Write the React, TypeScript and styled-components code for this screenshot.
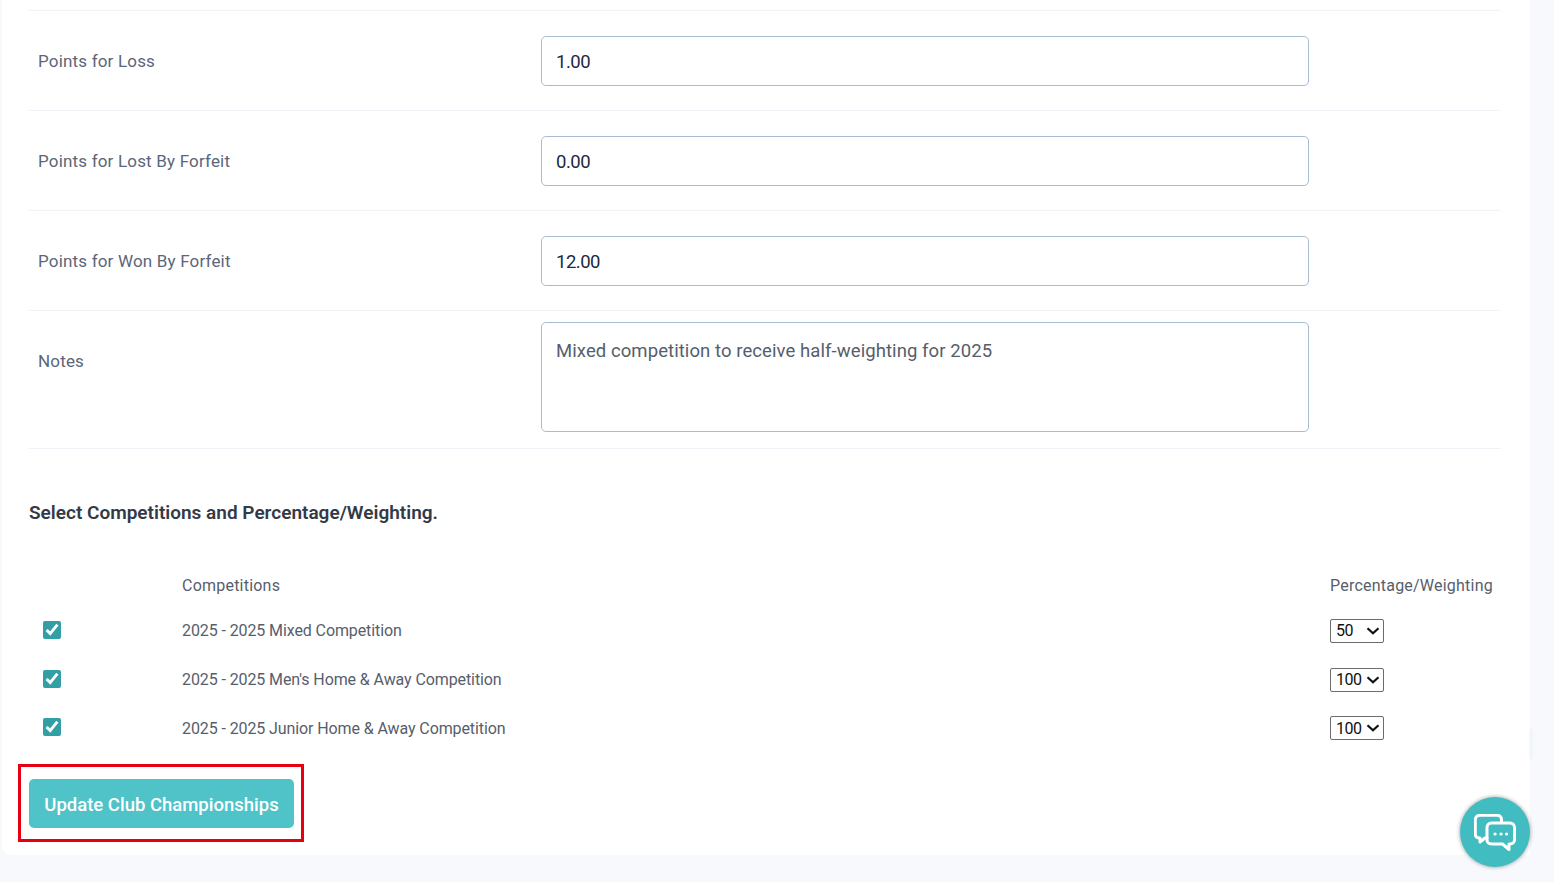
import styled, { createGlobalStyle } from 'styled-components';

const GlobalStyle = createGlobalStyle`
  html, body {
    margin: 0;
    height: 882px;
    overflow: hidden;
    background: #f7f9fd;
    font-family: Roboto, "Liberation Sans", sans-serif;
  }
`;

const Card = styled.main`
  position: relative;
  box-sizing: border-box;
  width: 1528px;
  height: 855px;
  margin-left: 2px;
  padding: 0 29px 0 27px;
  background: #fff;
  border-bottom-left-radius: 10px;

  &::after {
    content: '';
    position: absolute;
    right: -2px;
    top: 729px;
    width: 2px;
    height: 30px;
    background: #eef0f3;
    border-radius: 0 3px 3px 0;
    filter: blur(1px);
  }
`;

const TopEdge = styled.div`
  height: 10px;
  border-bottom: 1px solid #f0f3f7;
`;

const FormRow = styled.div<{ $tall?: boolean }>`
  display: grid;
  grid-template-columns: 512px 768px;
  align-items: ${(p) => (p.$tall ? 'start' : 'center')};
  box-sizing: border-box;
  height: ${(p) => (p.$tall ? 138 : 100)}px;
  padding-top: ${(p) => (p.$tall ? 11 : 0)}px;
  border-bottom: 1px solid #f0f3f7;
`;

const Label = styled.label<{ $tall?: boolean }>`
  padding-left: 9px;
  padding-top: ${(p) => (p.$tall ? 29 : 0)}px;
  font-size: 17px;
  line-height: 20px;
  letter-spacing: 0.18px;
  color: #5b667a;
`;

const TextInput = styled.input`
  box-sizing: border-box;
  width: 768px;
  height: 50px;
  padding: 2px 14px 0;
  border: 1px solid #a9bdd2;
  border-radius: 5px;
  background: #fff;
  font: 400 18.5px Roboto, sans-serif;
  letter-spacing: -0.5px;
  color: #1d2a3f;
  outline: none;
`;

const NotesInput = styled.textarea`
  display: block;
  box-sizing: border-box;
  width: 768px;
  height: 110px;
  padding: 16px 14px;
  border: 1px solid #a9bdd2;
  border-radius: 5px;
  background: #fff;
  font: 400 18.5px/24px Roboto, sans-serif;
  letter-spacing: 0.08px;
  color: #555e6c;
  outline: none;
  resize: none;
`;

const SectionTitle = styled.h2`
  margin: 52px 0 0;
  font-size: 19px;
  line-height: 24px;
  font-weight: 600;
  color: #333a47;
`;

const CompTable = styled.div`
  margin-top: 38px;
  display: flex;
  flex-direction: column;
`;

const CompRow = styled.div<{ $head?: boolean }>`
  display: grid;
  grid-template-columns: 153px 1148px 1fr;
  align-items: center;
  box-sizing: border-box;
  height: ${(p) => (p.$head ? 43.5 : 48.7)}px;
  padding-top: ${(p) => (p.$head ? 2 : 0)}px;
  font-size: 16px;
  letter-spacing: ${(p) => (p.$head ? 0.22 : -0.1)}px;
  color: #575e6b;
`;

const Tick = styled.input`
  width: 18px;
  height: 18px;
  margin: -2px 0 0 14px;
  accent-color: #329fa6;
`;

const SelectWrap = styled.span`
  position: relative;
  display: block;
  width: 54px;
  height: 24px;
`;

const Percent = styled.select`
  appearance: none;
  display: block;
  box-sizing: border-box;
  width: 54px;
  height: 24px;
  padding: 0 0 0 5px;
  border: 1px solid #6b6b6b;
  border-radius: 2px;
  background: #fff;
  font: 400 16px Roboto, sans-serif;
  letter-spacing: -0.5px;
  color: #111;
`;

const Chevron = styled.svg`
  position: absolute;
  right: 4px;
  top: 8px;
  pointer-events: none;
`;

const Highlight = styled.div`
  box-sizing: border-box;
  width: 286px;
  height: 78px;
  margin: 11px 0 0 -11px;
  padding: 12px 8px;
  border: 3px solid #e60012;
`;

const SaveButton = styled.button`
  width: 265px;
  height: 49px;
  padding: 3px 0 0;
  border: 0;
  border-radius: 5px;
  background: #4fc3c7;
  color: #fff;
  font: 500 18.5px Roboto, sans-serif;
`;

const ChatBubble = styled.button`
  position: fixed;
  left: 1460px;
  top: 797px;
  display: flex;
  align-items: center;
  justify-content: center;
  width: 70px;
  height: 70px;
  padding: 0;
  border: 0;
  border-radius: 50%;
  background: #41bdc2;
  box-shadow: 0 0 4px rgba(0, 0, 0, 0.4);
`;

const fields = [
  { label: 'Points for Loss', value: '1.00' },
  { label: 'Points for Lost By Forfeit', value: '0.00' },
  { label: 'Points for Won By Forfeit', value: '12.00' },
];

const competitions = [
  { name: '2025 - 2025 Mixed Competition', weight: '50' },
  { name: "2025 - 2025 Men's Home & Away Competition", weight: '100' },
  { name: '2025 - 2025 Junior Home & Away Competition', weight: '100' },
];

const weights = ['25', '50', '75', '100'];

export default function App() {
  return (
    <>
      <GlobalStyle />
      <Card>
        <TopEdge />
        {fields.map((f) => (
          <FormRow key={f.label}>
            <Label>{f.label}</Label>
            <TextInput defaultValue={f.value} />
          </FormRow>
        ))}
        <FormRow $tall>
          <Label $tall>Notes</Label>
          <NotesInput defaultValue="Mixed competition to receive half-weighting for 2025" />
        </FormRow>
        <SectionTitle>Select Competitions and Percentage/Weighting.</SectionTitle>
        <CompTable>
          <CompRow $head>
            <span />
            <span>Competitions</span>
            <span>Percentage/Weighting</span>
          </CompRow>
          {competitions.map((c) => (
            <CompRow key={c.name}>
              <Tick type="checkbox" defaultChecked />
              <span>{c.name}</span>
              <SelectWrap>
                <Percent defaultValue={c.weight}>
                  {weights.map((w) => (
                    <option key={w}>{w}</option>
                  ))}
                </Percent>
                <Chevron width="14" height="8" viewBox="0 0 14 8" fill="none" stroke="#111" strokeWidth="2.2">
                  <path d="M1.500 1.200 7 6.300l5.500-5.100" />
                </Chevron>
              </SelectWrap>
            </CompRow>
          ))}
        </CompTable>
        <Highlight>
          <SaveButton>Update Club Championships</SaveButton>
        </Highlight>
      </Card>
      <ChatBubble aria-label="Chat">
        <svg width="42" height="37" viewBox="0 0 42 37" fill="none" stroke="#fff" strokeWidth="3" strokeLinejoin="round" strokeLinecap="round">
          <path d="M27.500 8V5.500C27.500 3 25.500 1.300 23 1.300H6C3.300 1.300 1.300 3.300 1.300 6v14c0 2.500 1.700 4 4.200 4H6v4l5-4h2" />
          <path d="M17.500 9H36c2.500 0 4.500 2 4.500 4.500V26c0 2.500-2 4-4.500 4h-1v5.500L28.500 30h-11C15 30 13 28.500 13 26V13.500C13 11 15 9 17.500 9z" />
          <path d="M21 20h.1M27 20h.1M32.500 20h.1" strokeWidth="3.2" />
        </svg>
      </ChatBubble>
    </>
  );
}
